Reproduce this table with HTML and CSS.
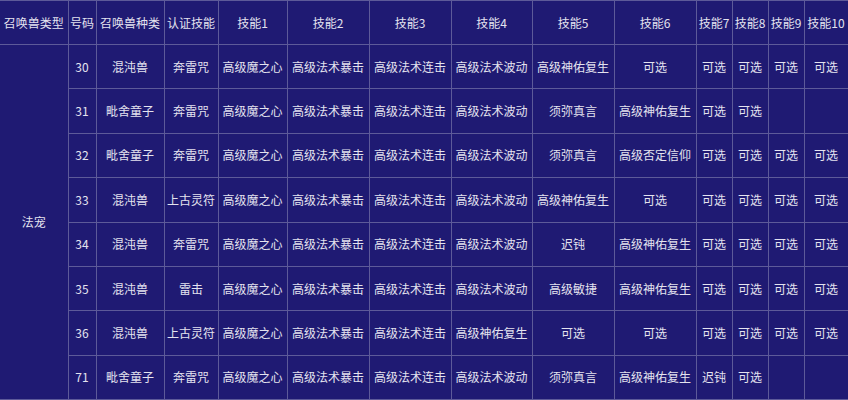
FILE: index.html
```html
<!DOCTYPE html>
<html lang="zh-CN">
<head>
<meta charset="utf-8">
<title>召唤兽表</title>
<link rel="stylesheet" href="styles.css">
</head>
<body>
<table class="grid">
  <colgroup>
    <col class="c-type"><col class="c-no"><col class="c-kind"><col class="c-cert">
    <col class="c-s1"><col class="c-s2"><col class="c-s2"><col class="c-s4"><col class="c-s2"><col class="c-s2">
    <col class="c-sm"><col class="c-sm"><col class="c-sm"><col class="c-s10">
  </colgroup>
  <thead>
    <tr class="head">
      <th class="first">召唤兽类型</th><th>号码</th><th>召唤兽种类</th><th>认证技能</th>
      <th>技能1</th><th>技能2</th><th>技能3</th><th>技能4</th><th>技能5</th><th>技能6</th>
      <th>技能7</th><th>技能8</th><th>技能9</th><th>技能10</th>
    </tr>
  </thead>
  <tbody>
    <tr>
      <td class="first" rowspan="8">法宠</td>
      <td>30</td><td>混沌兽</td><td>奔雷咒</td><td>高级魔之心</td><td>高级法术暴击</td><td>高级法术连击</td><td>高级法术波动</td><td>高级神佑复生</td><td>可选</td><td>可选</td><td>可选</td><td>可选</td><td>可选</td>
    </tr>
    <tr>
      <td>31</td><td>毗舍童子</td><td>奔雷咒</td><td>高级魔之心</td><td>高级法术暴击</td><td>高级法术连击</td><td>高级法术波动</td><td>须弥真言</td><td>高级神佑复生</td><td>可选</td><td>可选</td><td></td><td></td>
    </tr>
    <tr>
      <td>32</td><td>毗舍童子</td><td>奔雷咒</td><td>高级魔之心</td><td>高级法术暴击</td><td>高级法术连击</td><td>高级法术波动</td><td>须弥真言</td><td>高级否定信仰</td><td>可选</td><td>可选</td><td>可选</td><td>可选</td>
    </tr>
    <tr>
      <td>33</td><td>混沌兽</td><td>上古灵符</td><td>高级魔之心</td><td>高级法术暴击</td><td>高级法术连击</td><td>高级法术波动</td><td>高级神佑复生</td><td>可选</td><td>可选</td><td>可选</td><td>可选</td><td>可选</td>
    </tr>
    <tr>
      <td>34</td><td>混沌兽</td><td>奔雷咒</td><td>高级魔之心</td><td>高级法术暴击</td><td>高级法术连击</td><td>高级法术波动</td><td>迟钝</td><td>高级神佑复生</td><td>可选</td><td>可选</td><td>可选</td><td>可选</td>
    </tr>
    <tr>
      <td>35</td><td>混沌兽</td><td>雷击</td><td>高级魔之心</td><td>高级法术暴击</td><td>高级法术连击</td><td>高级法术波动</td><td>高级敏捷</td><td>高级神佑复生</td><td>可选</td><td>可选</td><td>可选</td><td>可选</td>
    </tr>
    <tr>
      <td>36</td><td>混沌兽</td><td>上古灵符</td><td>高级魔之心</td><td>高级法术暴击</td><td>高级法术连击</td><td>高级神佑复生</td><td>可选</td><td>可选</td><td>可选</td><td>可选</td><td>可选</td><td>可选</td>
    </tr>
    <tr>
      <td>71</td><td>毗舍童子</td><td>奔雷咒</td><td>高级魔之心</td><td>高级法术暴击</td><td>高级法术连击</td><td>高级法术波动</td><td>须弥真言</td><td>高级神佑复生</td><td>迟钝</td><td>可选</td><td></td><td></td>
    </tr>
  </tbody>
</table>
</body>
</html>
```

FILE: styles.css
```css
html, body {
  margin: 0;
  padding: 0;
  background: #1f1a73;
  overflow: hidden;
}

.grid {
  table-layout: fixed;
  width: 848px;
  border-collapse: collapse;
  font-family: "Noto Sans CJK SC", "Microsoft YaHei", sans-serif;
  font-size: 12px;
  color: #e4e3ef;
  background: #1f1a73;
}

.c-type { width: 68px; }
.c-no { width: 28px; }
.c-kind { width: 68px; }
.c-cert { width: 54px; }
.c-s1 { width: 69px; }
.c-s2 { width: 82px; }
.c-s4 { width: 81px; }
.c-sm { width: 36px; }
.c-s10 { width: 44px; }

.grid th,
.grid td {
  border: 1px solid #5d5a99;
  padding: 0;
  text-align: center;
  vertical-align: middle;
  font-weight: normal;
  white-space: nowrap;
  overflow: hidden;
  line-height: 16px;
}

.grid .first {
  border-left: none;
}

.head th {
  height: 43px;
}

.grid tbody td {
  height: 43.4px;
}
```
